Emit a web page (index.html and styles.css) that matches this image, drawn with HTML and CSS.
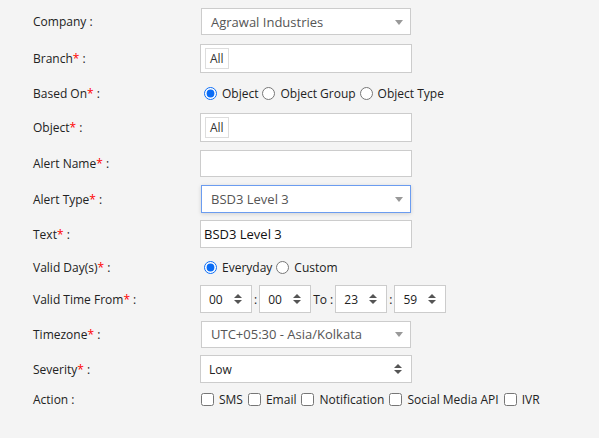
FILE: index.html
```html
<!DOCTYPE html>
<html lang="en">
<head>
  <meta charset="UTF-8" />
  <meta name="viewport" content="width=device-width, initial-scale=1" />
  <title>Alert</title>
  <link rel="stylesheet" href="styles.css">
</head>
<body>
  <form class="alert-form">
    <label class="alert-form__label">Company :</label>
    <div class="picker">
      <span class="picker__value">Agrawal Industries</span>
      <span class="picker__arrow"></span>
    </div>

    <label class="alert-form__label">Branch<span class="req">*</span> :</label>
    <div class="tags"><span class="tags__item">All</span></div>

    <label class="alert-form__label">Based On<span class="req">*</span> :</label>
    <div class="choices">
      <label class="choices__item"><input type="radio" name="based" checked> Object</label>
      <label class="choices__item"><input type="radio" name="based"> Object Group</label>
      <label class="choices__item"><input type="radio" name="based"> Object Type</label>
    </div>

    <label class="alert-form__label">Object<span class="req">*</span> :</label>
    <div class="tags"><span class="tags__item">All</span></div>

    <label class="alert-form__label">Alert Name<span class="req">*</span> :</label>
    <input type="text" class="text-box text-box--short" value="">

    <label class="alert-form__label">Alert Type<span class="req">*</span> :</label>
    <div class="picker picker--focus">
      <span class="picker__value">BSD3 Level 3</span>
      <span class="picker__arrow"></span>
    </div>

    <label class="alert-form__label">Text<span class="req">*</span> :</label>
    <input type="text" class="text-box" value="BSD3 Level 3">

    <label class="alert-form__label">Valid Day(s)<span class="req">*</span> :</label>
    <div class="choices">
      <label class="choices__item"><input type="radio" name="days" checked> Everyday</label>
      <label class="choices__item"><input type="radio" name="days"> Custom</label>
    </div>

    <label class="alert-form__label">Valid Time From<span class="req">*</span> :</label>
    <div class="time-range">
      <div class="spin-select spin-select--small">00<span class="spin-select__arrows"></span></div>
      <span>:</span>
      <div class="spin-select spin-select--small">00<span class="spin-select__arrows"></span></div>
      <span>To :</span>
      <div class="spin-select spin-select--small">23<span class="spin-select__arrows"></span></div>
      <span>:</span>
      <div class="spin-select spin-select--small">59<span class="spin-select__arrows"></span></div>
    </div>

    <label class="alert-form__label">Timezone<span class="req">*</span> :</label>
    <div class="picker">
      <span class="picker__value">UTC+05:30 - Asia/Kolkata</span>
      <span class="picker__arrow"></span>
    </div>

    <label class="alert-form__label">Severity<span class="req">*</span> :</label>
    <div class="spin-select">Low<span class="spin-select__arrows"></span></div>

    <label class="alert-form__label">Action :</label>
    <div class="checks">
      <label class="checks__item"><input type="checkbox"> SMS</label>
      <label class="checks__item"><input type="checkbox"> Email</label>
      <label class="checks__item"><input type="checkbox"> Notification</label>
      <label class="checks__item"><input type="checkbox"> Social Media API</label>
      <label class="checks__item"><input type="checkbox"> IVR</label>
    </div>
  </form>
</body>
</html>
```

FILE: styles.css
```css
body {
  margin: 0;
  background-color: #f4f4f4;
  font-family: 'Open Sans', 'Liberation Sans', sans-serif;
  font-size: 12px;
  color: #222;
}
.alert-form {
  display: grid;
  grid-template-columns: 167px 212px;
  grid-template-rows: 43px 31px 38px 31px 41px 30px 40px 26px 38px 32px 38px 22px;
  align-items: center;
  padding-left: 33px;
}
.alert-form__label {
  white-space: nowrap;
}
.req {
  color: #f00;
}

/* select2 style boxes */
.picker {
  position: relative;
  box-sizing: border-box;
  width: 210px;
  height: 27px;
  margin-left: 1px;
  background: #fff;
  border: 1px solid #ccc;
  display: flex;
  align-items: center;
  padding-left: 9px;
  color: #555;
  font-size: 13px;
}
.picker--focus {
  height: 28px;
  border-color: #6b9cf0;
  box-shadow: 0 1px 4px rgba(0,0,0,0.15);
}
.picker__arrow {
  position: absolute;
  right: 7px;
  top: 50%;
  margin-top: -2px;
  border-left: 4px solid transparent;
  border-right: 4px solid transparent;
  border-top: 5px solid #999;
}

/* tag boxes */
.tags {
  box-sizing: border-box;
  width: 212px;
  height: 29px;
  background: #fff;
  border: 1px solid #ccc;
  padding: 3px 4px;
}
.tags__item {
  display: inline-block;
  box-sizing: border-box;
  height: 21px;
  line-height: 19px;
  padding: 0 4px;
  border: 1px solid #ddd;
  color: #333;
}

.text-box {
  box-sizing: border-box;
  width: 212px;
  height: 28px;
  margin: 0;
  padding: 1px 3px;
  border: 1px solid #ccc;
  background: #fff;
  font-family: inherit;
  font-size: 13px;
  font-weight: normal;
  color: #111;
}
.text-box--short {
  height: 27px;
}

/* radios and checkboxes */
.choices, .checks {
  display: flex;
  align-items: center;
  white-space: nowrap;
}
.choices {
  padding-left: 4px;
  gap: 4px;
}
.choices__item, .checks__item {
  display: flex;
  align-items: center;
  gap: 5px;
}
.choices input {
  margin: 0;
  width: 13px;
  height: 13px;
  accent-color: #0a6cf5;
}
.checks {
  padding-left: 1px;
  gap: 5px;
}
.checks input {
  margin: 0;
  width: 13px;
  height: 13px;
}

/* native looking selects with up/down arrows */
.spin-select {
  position: relative;
  box-sizing: border-box;
  width: 212px;
  height: 28px;
  background: #fff;
  border: 1px solid #ccc;
  display: flex;
  align-items: center;
  padding-left: 8px;
  color: #222;
}
.spin-select--small {
  flex: none;
  width: 52px;
}
.spin-select__arrows {
  position: absolute;
  right: 9px;
  top: 50%;
  width: 8px;
  height: 10px;
  margin-top: -5px;
}
.spin-select__arrows::before,
.spin-select__arrows::after {
  content: "";
  position: absolute;
  left: 0;
  border-left: 4px solid transparent;
  border-right: 4px solid transparent;
}
.spin-select__arrows::before {
  top: 0;
  border-bottom: 4px solid #555;
}
.spin-select__arrows::after {
  bottom: 0;
  border-top: 4px solid #555;
}
.time-range {
  display: flex;
  align-items: center;
  gap: 2px;
  white-space: nowrap;
}
```
